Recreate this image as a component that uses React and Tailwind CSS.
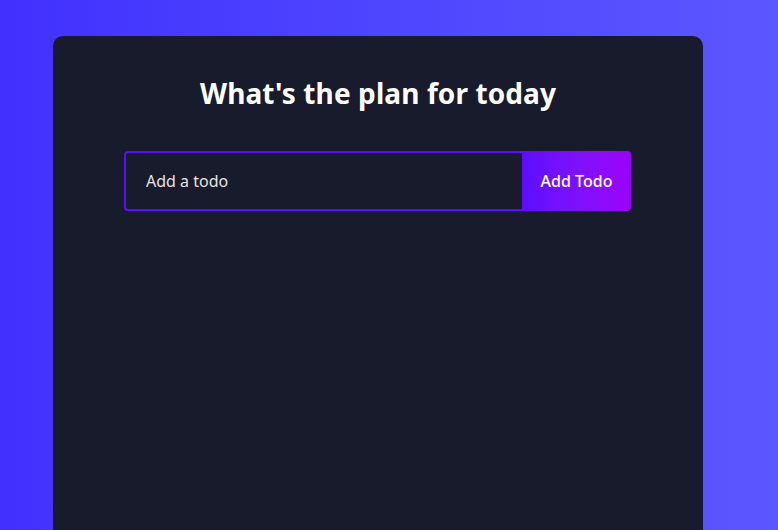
export default function App() {
  return (
    <div
      className="w-full h-[530px] overflow-hidden bg-gradient-to-r from-[#4230fe] to-[#5b56ff] pt-[36px]"
      style={{ fontFamily: '"Noto Sans", "DejaVu Sans", sans-serif' }}
    >
      <div className="ml-[53px] w-[650px] min-h-[600px] bg-[#181b2b] rounded-[10px] flex flex-col items-center">
        <h1 className="text-white text-[28px] font-bold leading-none mt-[43px] tracking-[0.1px]">
          What's the plan for today
        </h1>
        <form className="flex self-start ml-[71px] mt-[44px]" onSubmit={(e) => e.preventDefault()}>
          <input
            placeholder="Add a todo"
            className="w-[398px] h-[60px] bg-transparent border-2 border-[#5d0cff] border-r-0 rounded-l-[4px] pl-[20px] text-[16px] text-white placeholder:text-[#e4e4e4] outline-none"
          />
          <button
            type="button"
            className="w-[109px] h-[60px] rounded-r-[4px] bg-gradient-to-r from-[#5d0cff] to-[#9b00fa] text-white text-[16px] font-medium"
          >
            Add Todo
          </button>
        </form>
      </div>
    </div>
  );
}
